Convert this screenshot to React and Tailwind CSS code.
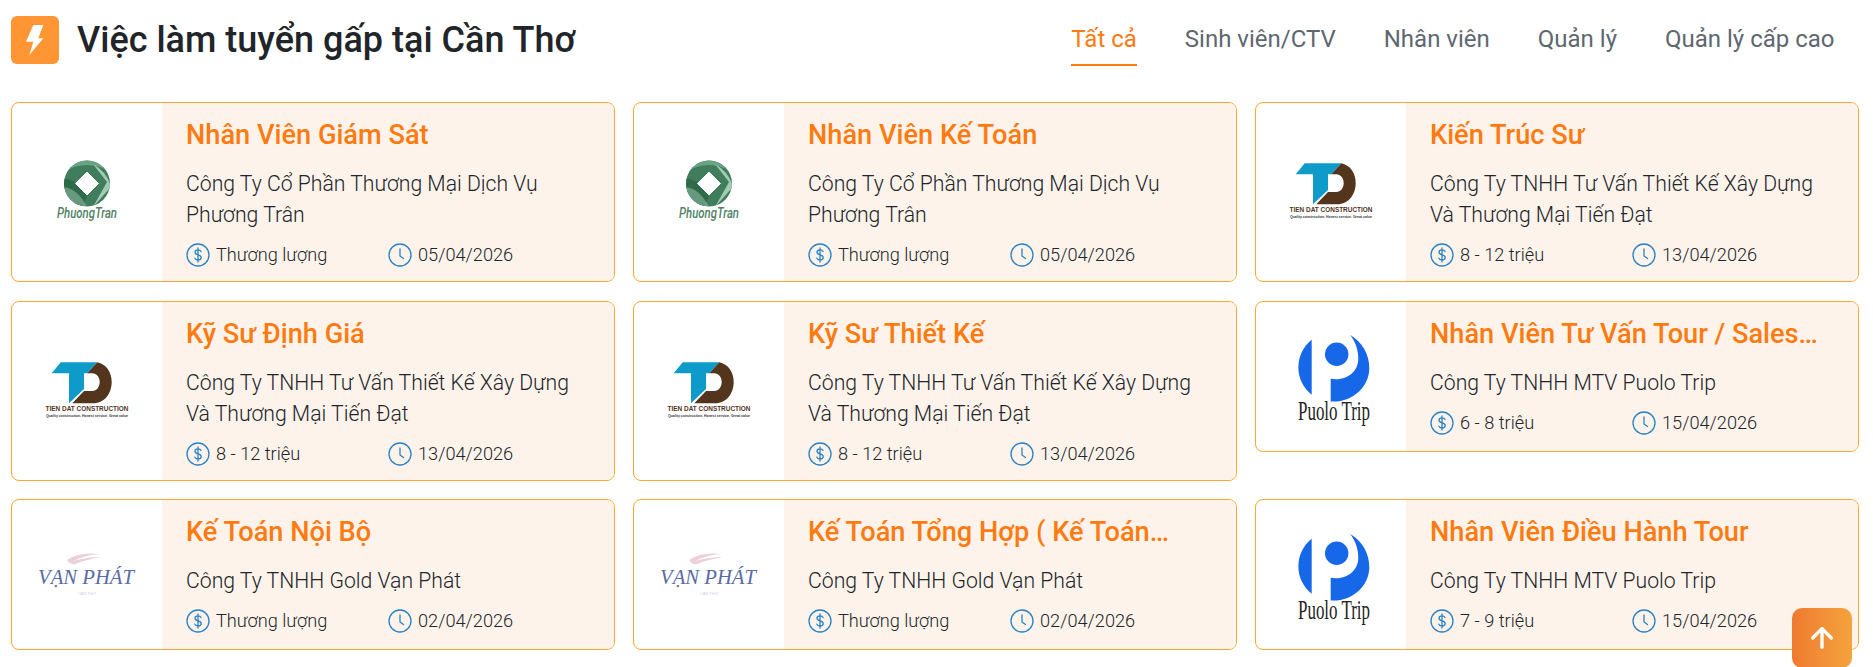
import React from 'react';
import { ArrowUp } from 'lucide-react';

const PhuongTranLogo = () => (
    <svg width="90" height="72" viewBox="0 0 90 72" className="overflow-visible">
        <defs>
            <clipPath id="pt-circle"><circle cx="45" cy="27.500" r="23" /></clipPath>
        </defs>
        <circle cx="45" cy="27.500" r="23" fill="#3f7d5c" />
        <g clipPath="url(#pt-circle)">
            <path d="M22 3h46v13q-11-7-23-7t-23 7z" fill="#68a384" />
            <path d="M51 8q14 8 18 23l-18 20 14-25z" fill="#a3cbb4" />
            <path d="M22 23q14 0 23 18l-6 11-17-8z" fill="#2f6a4a" />
            <path d="M22 31q14 2 23 20l-23-6z" fill="#94bfa7" opacity="0.55" />
        </g>
        <path d="M45 16l11.500 11.500-11.500 11.500-11.500-11.500z" fill="#fff" stroke="#fff" strokeWidth="1" strokeLinejoin="round" />
        <text x="45" y="62" textAnchor="middle" className="font-['Roboto',sans-serif] italic font-medium" fontSize="15" textLength="60" lengthAdjust="spacingAndGlyphs" fill="#4f8266">PhuongTran</text>
    </svg>
);

const TienDatLogo = () => (
    <svg width="90" height="72" viewBox="0 0 90 72" className="overflow-visible">
        <path d="M9.700 18.300L18.700 7.300H55.300L45.300 18.300H42L42 34L27 48.300V18.300z" fill="#0f9bca" />
        <path d="M55.300 7.300C64 9 69.700 17 69.700 27C69.700 38 63 48.300 51 48.300H30.300L42 36H50.300C54.500 36 57.700 32 57.700 27C57.700 22 54.500 18.300 50.300 18.300H45.300z" fill="#53341c" />
        <text x="45" y="56" textAnchor="middle" className="font-['Liberation_Sans',sans-serif] font-bold" fontSize="7" textLength="83" lengthAdjust="spacingAndGlyphs" fill="#53341c">TIEN DAT CONSTRUCTION</text>
        <text x="45" y="61.500" textAnchor="middle" className="font-['Liberation_Sans',sans-serif] font-bold" fontSize="3.400" textLength="82" lengthAdjust="spacingAndGlyphs" fill="#333">Quality construction. Honest service. Great value</text>
    </svg>
);

const VanPhatLogo = () => (
    <svg width="100" height="52" viewBox="0 0 100 52" className="overflow-visible">
        <path d="M30 11q12-8 32-6-14 1-26 7 14-4 28-4-16 3-26 7-5 1-8-4z" fill="#ecd0d8" />
        <text x="49" y="35" textAnchor="middle" className="font-['Liberation_Serif',serif] italic" fontSize="21" textLength="96" lengthAdjust="spacingAndGlyphs" fill="#5a6ba6">VẠN PHÁT</text>
        <text x="50" y="46" textAnchor="middle" className="font-['Liberation_Sans',sans-serif]" fontSize="4" fill="#cfd2da">CẦN THƠ</text>
    </svg>
);

const PuoloLogo = () => (
    <svg width="80" height="96" viewBox="0 0 80 96" className="overflow-visible">
        <g transform="translate(1 2)">
            <path d="M19.700 9.800A35 35 0 0 0 19.700 64.800z" fill="#1668e8" />
            <path d="M58 4.800C70 12 77.300 24 77.300 38.200C77.300 57 60 73 38.700 71.500V48.800C52 51 66.300 44 66.300 28.200C66.300 18 62 10 58 4.800z" fill="#1668e8" />
            <circle cx="44.700" cy="24.200" r="11.700" fill="#1668e8" />
            <text x="42" y="90" textAnchor="middle" className="font-['Liberation_Serif',serif]" fontSize="28" textLength="72" lengthAdjust="spacingAndGlyphs" fill="#222">Puolo Trip</text>
        </g>
    </svg>
);

const LOGOS = {
    phuongtran: PhuongTranLogo,
    tiendat: TienDatLogo,
    vanphat: VanPhatLogo,
    puolo: PuoloLogo,
};

const JOBS = [
    { title: 'Nhân Viên Giám Sát', company: 'Công Ty Cổ Phần Thương Mại Dịch Vụ Phương Trân', salary: 'Thương lượng', date: '05/04/2026', logo: 'phuongtran' },
    { title: 'Nhân Viên Kế Toán', company: 'Công Ty Cổ Phần Thương Mại Dịch Vụ Phương Trân', salary: 'Thương lượng', date: '05/04/2026', logo: 'phuongtran' },
    { title: 'Kiến Trúc Sư', company: 'Công Ty TNHH Tư Vấn Thiết Kế Xây Dựng Và Thương Mại Tiến Đạt', salary: '8 - 12 triệu', date: '13/04/2026', logo: 'tiendat' },
    { title: 'Kỹ Sư Định Giá', company: 'Công Ty TNHH Tư Vấn Thiết Kế Xây Dựng Và Thương Mại Tiến Đạt', salary: '8 - 12 triệu', date: '13/04/2026', logo: 'tiendat' },
    { title: 'Kỹ Sư Thiết Kế', company: 'Công Ty TNHH Tư Vấn Thiết Kế Xây Dựng Và Thương Mại Tiến Đạt', salary: '8 - 12 triệu', date: '13/04/2026', logo: 'tiendat' },
    { title: 'Nhân Viên Tư Vấn Tour / Sales Tour Du Lịch', company: 'Công Ty TNHH MTV Puolo Trip', salary: '6 - 8 triệu', date: '15/04/2026', logo: 'puolo' },
    { title: 'Kế Toán Nội Bộ', company: 'Công Ty TNHH Gold Vạn Phát', salary: 'Thương lượng', date: '02/04/2026', logo: 'vanphat' },
    { title: 'Kế Toán Tổng Hợp ( Kế Toán Trưởng )', company: 'Công Ty TNHH Gold Vạn Phát', salary: 'Thương lượng', date: '02/04/2026', logo: 'vanphat' },
    { title: 'Nhân Viên Điều Hành Tour', company: 'Công Ty TNHH MTV Puolo Trip', salary: '7 - 9 triệu', date: '15/04/2026', logo: 'puolo' },
];

const TABS = ['Tất cả', 'Sinh viên/CTV', 'Nhân viên', 'Quản lý', 'Quản lý cấp cao'];

const DollarIcon = () => (
    <svg width="24" height="24" viewBox="0 0 24 24" fill="none" stroke="#2a82c4" strokeWidth="1.300" strokeLinecap="round" className="shrink-0">
        <circle cx="12" cy="12" r="11" />
        <path d="M15 8.600c-.4-1-1.500-1.700-3-1.700-1.800 0-3 1-3 2.400 0 3.400 6.200 1.800 6.200 5.200 0 1.500-1.300 2.500-3.200 2.500-1.600 0-2.800-.7-3.200-1.900M12 5v14" />
    </svg>
);

const ClockIcon = () => (
    <svg width="24" height="24" viewBox="0 0 24 24" fill="none" stroke="#2a82c4" strokeWidth="1.300" strokeLinecap="round" strokeLinejoin="round" className="shrink-0">
        <circle cx="12" cy="12" r="11" />
        <path d="M12 6v7l3.500 2.500" />
    </svg>
);

const JobCard = ({ job }) => {
    const Logo = LOGOS[job.logo];
    return (
        <div className="flex self-start overflow-hidden rounded-lg border border-[#ffa82e] bg-white">
            <div className="flex min-h-[149px] w-[150px] shrink-0 items-center justify-center self-stretch">
                <Logo />
            </div>
            <div className="min-w-0 flex-1 bg-[#fdf3eb] pt-4 pr-6 pb-[14px] pl-[24px]">
                <h3 className="line-clamp-1 text-[27.2px] leading-8 font-medium text-[#ff7a0f]">{job.title}</h3>
                <p className="mt-[17px] text-[21.2px] leading-[31px] font-light text-[#212529]">{job.company}</p>
                <div className="mt-[13px] flex text-[18.2px] leading-6 font-light text-[#212529]">
                    <div className="flex w-[202px] items-center gap-[6px]">
                        <DollarIcon />
                        <span>{job.salary}</span>
                    </div>
                    <div className="flex items-center gap-[6px]">
                        <ClockIcon />
                        <span>{job.date}</span>
                    </div>
                </div>
            </div>
        </div>
    );
};

export default function App() {
    return (
        <div className="h-[667px] overflow-hidden bg-white pt-4 pr-[14.5px] pl-[11px] font-['Roboto',sans-serif]">
            {/* Header */}
            <div className="flex h-[67px] items-start justify-between">
                <div className="flex items-center gap-[18px]">
                    <div className="flex h-12 w-12 items-center justify-center rounded-md bg-[#ff9533]">
                        <svg width="18" height="30" viewBox="0 0 18 30" fill="#fff">
                            <path d="M7.300 0H17.300L12.300 13.300H17.300L3.300 30L7.300 16.700H0z" />
                        </svg>
                    </div>
                    <h2 className="text-4xl leading-12 font-medium text-[#212529]">Việc làm tuyển gấp tại Cần Thơ</h2>
                </div>
                <nav className="flex gap-12 pr-6 text-2xl">
                    {TABS.map((tab, i) => (
                        <a
                            key={tab}
                            className={`h-[50px] border-b-2 pt-2 leading-[30px] ${i === 0 ? 'border-[#ff7a0f] text-[#ff7a0f]' : 'border-transparent text-[#5e6770]'}`}
                        >
                            {tab}
                        </a>
                    ))}
                </nav>
            </div>

            {/* Jobs */}
            <div className="mt-[19px] grid grid-cols-3 gap-x-[18.5px] gap-y-[18.5px]">
                {JOBS.map((job) => (
                    <JobCard key={job.title} job={job} />
                ))}
            </div>

            <button className="fixed right-[21px] -bottom-px flex h-[60px] w-[60px] items-center justify-center rounded-[10px] bg-gradient-to-r from-[#ef7a30] to-[#f3a33d] text-white">
                <ArrowUp size={32} strokeWidth={2.5} />
            </button>
        </div>
    );
}
